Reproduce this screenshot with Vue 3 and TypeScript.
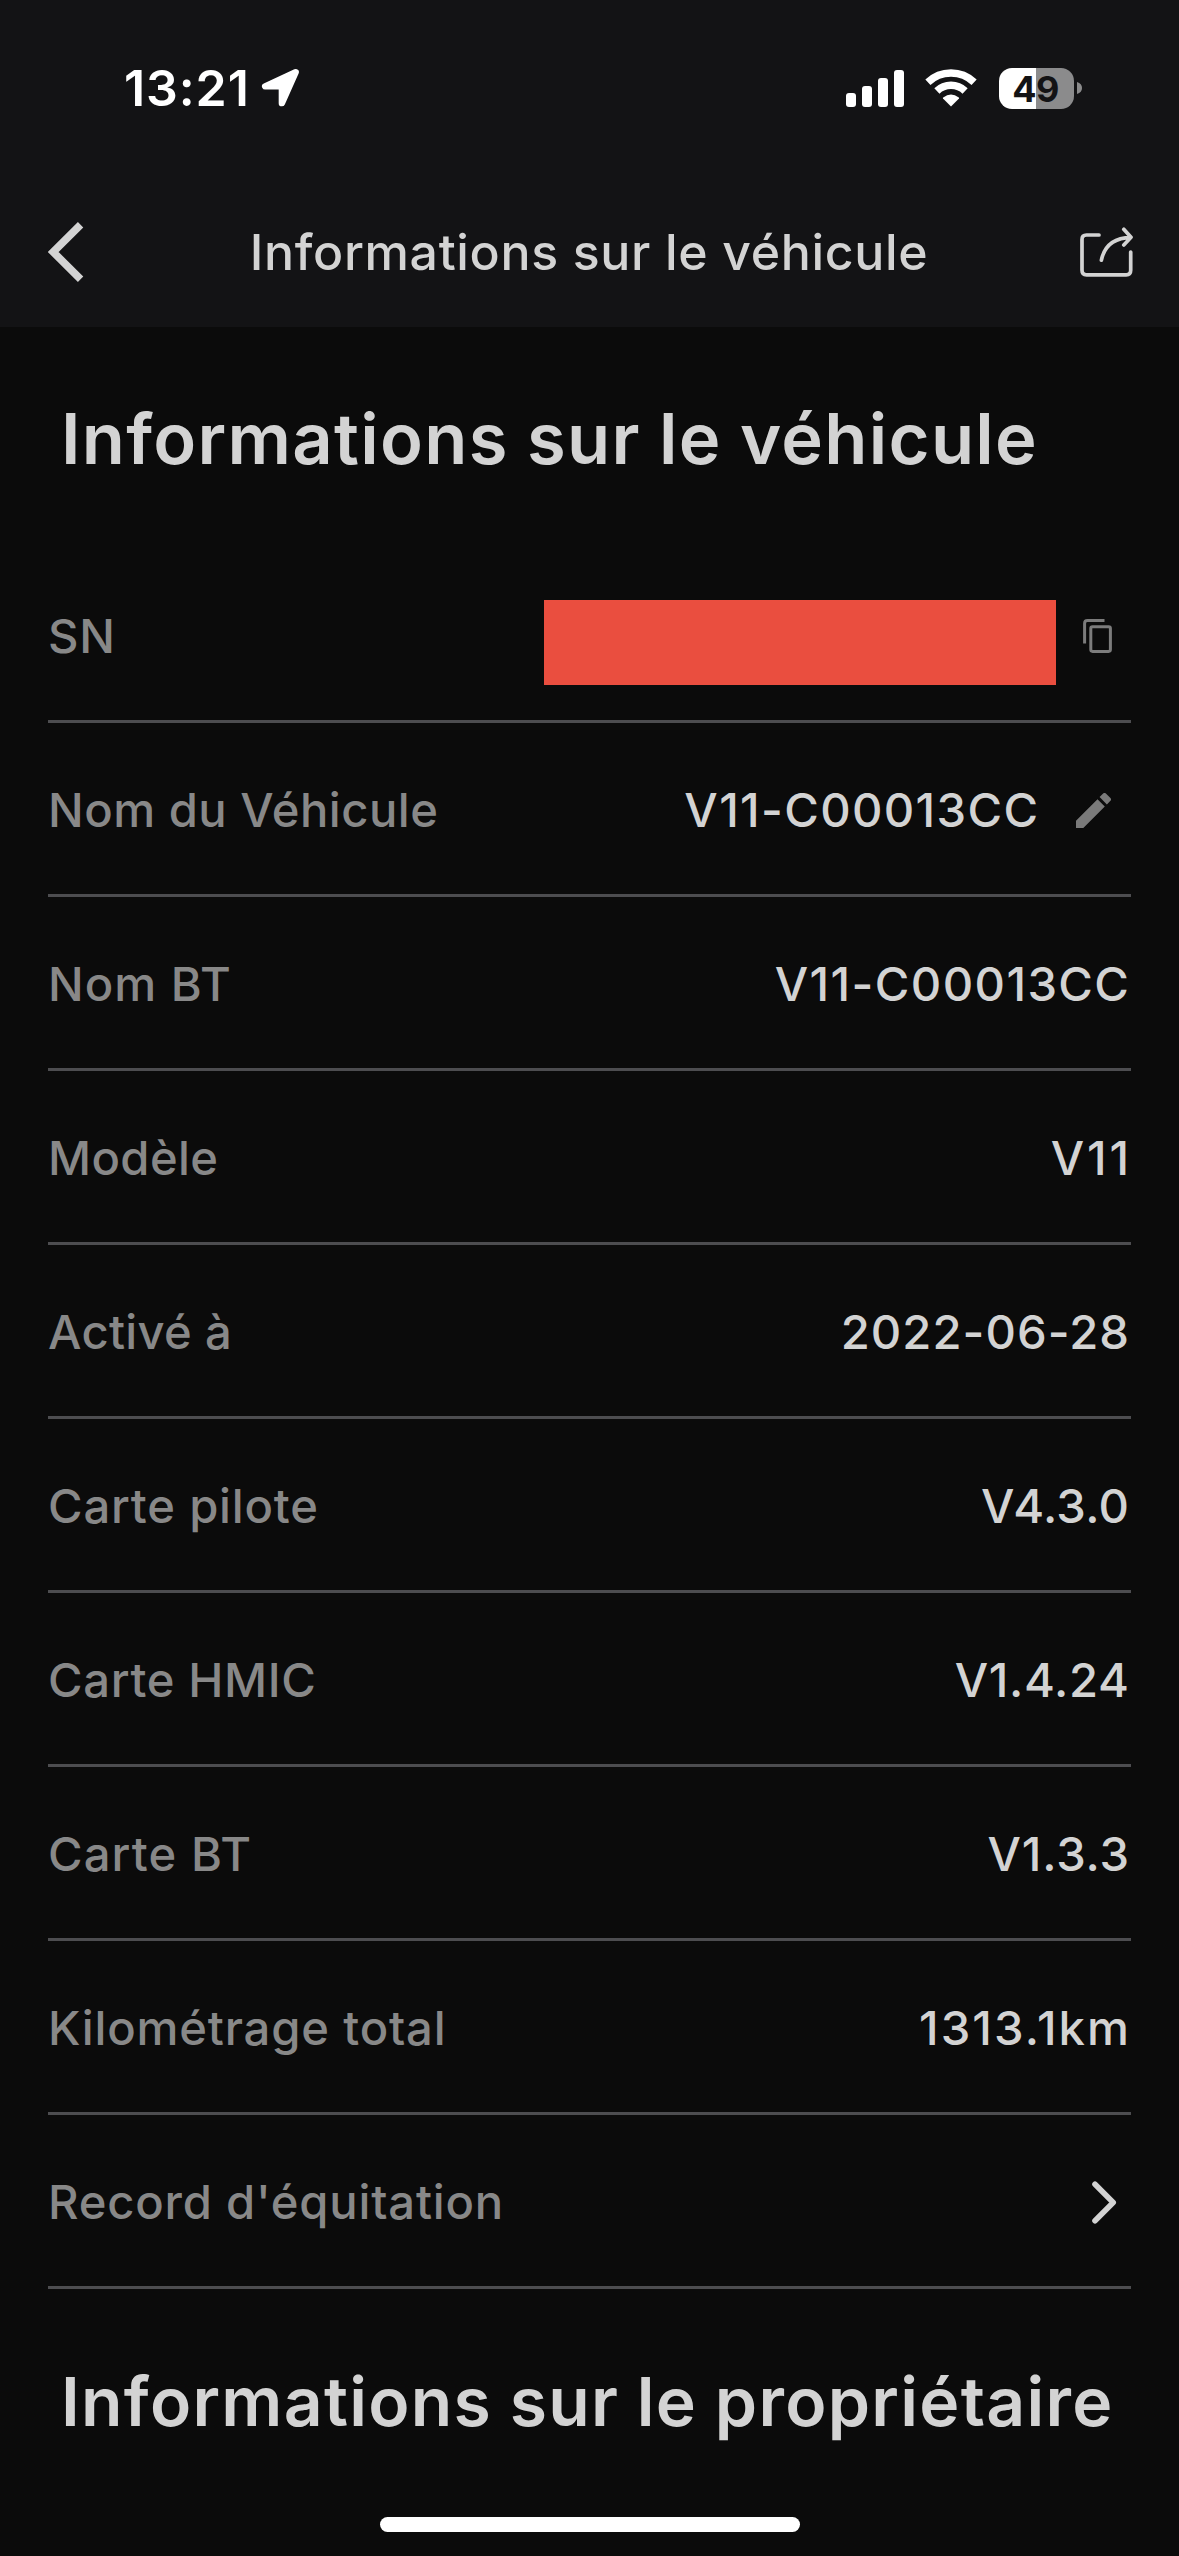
<script setup lang="ts">
interface InfoRow {
  id: string
  label: string
  value?: string
  kind?: 'serial' | 'edit' | 'link'
  /** Letter spacing in px for the label and for the value. */
  labelTrack: number
  valueTrack?: number
}

const rows: InfoRow[] = [
  { id: 'sn', label: 'SN', kind: 'serial', labelTrack: 0.8 },
  { id: 'name', label: 'Nom du Véhicule', value: 'V11-C00013CC', kind: 'edit', labelTrack: 0.5, valueTrack: 1.35 },
  { id: 'bt-name', label: 'Nom BT', value: 'V11-C00013CC', labelTrack: 1, valueTrack: 1.4 },
  { id: 'model', label: 'Modèle', value: 'V11', labelTrack: 0.4, valueTrack: 2.8 },
  { id: 'activated', label: 'Activé à', value: '2022-06-28', labelTrack: 0.3, valueTrack: 1.05 },
  { id: 'driver', label: 'Carte pilote', value: 'V4.3.0', labelTrack: 0.8, valueTrack: 0.3 },
  { id: 'hmic', label: 'Carte HMIC', value: 'V1.4.24', labelTrack: 0.65, valueTrack: 0.65 },
  { id: 'bt-board', label: 'Carte BT', value: 'V1.3.3', labelTrack: 1.1, valueTrack: 0.8 },
  { id: 'mileage', label: 'Kilométrage total', value: '1313.1km', labelTrack: 0.82, valueTrack: 2.1 },
  { id: 'rides', label: "Record d'équitation", kind: 'link', labelTrack: 0.8 },
]

const tracking = (px = 0) => ({ letterSpacing: `${px}px`, marginRight: `${-px}px` })
</script>

<template>
  <div class="screen">
    <header class="top">
      <div class="status">
        <div class="status-left">
          <span class="time">13:21</span>
          <svg class="location" width="40" height="40" viewBox="0 0 40 40">
            <path d="M35 4 L4 18.5 H21 V35.5 Z" fill="#fff" stroke="#fff" stroke-width="6.5" stroke-linejoin="round" transform="translate(.2 .2) scale(.985)" />
          </svg>
        </div>
        <div class="status-right">
          <svg class="signal" width="58" height="37" viewBox="0 0 58 37" fill="#fff">
            <rect x="0" y="23" width="10" height="14" rx="3" />
            <rect x="16" y="16" width="10" height="21" rx="3" />
            <rect x="32" y="8" width="10" height="29" rx="3" />
            <rect x="48" y="0" width="10" height="37" rx="3" />
          </svg>
          <svg class="wifi" width="52" height="38" viewBox="0 0 52 38">
            <g fill="none" stroke="#fff" stroke-width="7.4">
              <path d="M2.9 13.2 A33.5 33.5 0 0 1 49.1 13.2" />
              <path d="M11.9 22 A20.3 20.3 0 0 1 40.1 22" />
            </g>
            <path d="M26 37.6 L18 29.6 Q17.6 28.9 18.2 28.4 Q26 22.6 33.8 28.4 Q34.4 28.9 34 29.6 Z" fill="#fff" />
          </svg>
          <div class="battery">
            <div class="battery-body"><span>49</span></div>
            <svg width="5" height="12" viewBox="0 0 5 12"><path d="M0 0 Q5 1.6 5 6 Q5 10.4 0 12 Z" fill="#8b8b8c" /></svg>
          </div>
        </div>
      </div>
      <nav class="nav">
        <svg width="36" height="60" viewBox="0 0 36 60">
          <path d="M32.6 2.8 L5.2 30 L32.6 57.2" fill="none" stroke="#d3d3d3" stroke-width="7.6" />
        </svg>
        <h1>Informations sur le véhicule</h1>
        <svg width="54" height="52" viewBox="0 0 54 52" fill="none" stroke="#d3d3d3" stroke-width="3.7" stroke-linecap="round" stroke-linejoin="round">
          <path d="M19 9 H6.5 Q2 9 2 13.5 V44.3 Q2 48.8 6.5 48.8 H46.2 Q50.7 48.8 50.7 44.3 V26" />
          <path d="M21.4 34.2 C24 21 33 11.8 51 11.3 M43.8 3.3 L51 11.3 L43.8 19" />
        </svg>
      </nav>
    </header>

    <h2 class="heading">Informations sur le véhicule</h2>

    <ul class="rows">
      <li v-for="row in rows" :key="row.id" class="row" :class="row.kind">
        <span class="label" :style="tracking(row.labelTrack)">{{ row.label }}</span>
        <span class="side">
          <span v-if="row.value" class="value" :style="tracking(row.valueTrack)">{{ row.value }}</span>
          <template v-if="row.kind === 'serial'">
            <span class="mask"></span>
            <svg width="29" height="34" viewBox="0 0 29 34" fill="none" stroke="#7c7c7c" stroke-width="3">
              <path d="M1.6 24.5 V4.5 Q1.6 1.6 4.5 1.6 H21.5" />
              <rect x="7.8" y="7.8" width="19.6" height="24.6" rx="1.8" />
            </svg>
          </template>
          <svg v-else-if="row.kind === 'edit'" class="pencil" width="35" height="35" viewBox="3 3 18 18" fill="#7a7a7a">
            <path d="M3 17.25V21h3.75L17.81 9.94l-3.75-3.75L3 17.25zM20.71 7.04a.996.996 0 0 0 0-1.41l-2.34-2.34a.996.996 0 0 0-1.41 0l-1.83 1.83 3.75 3.75 1.83-1.83z" />
          </svg>
          <svg v-else-if="row.kind === 'link'" width="25" height="43" viewBox="0 0 25 43">
            <path d="M3 3.2 L21.2 21.5 L3 39.8" fill="none" stroke="#d3d3d3" stroke-width="5.6" stroke-linecap="round" stroke-linejoin="round" />
          </svg>
        </span>
      </li>
    </ul>

    <h2 class="heading owner">Informations sur le propriétaire</h2>

    <div class="home"></div>
  </div>
</template>

<style>
body {
  margin: 0;
  background: #0b0b0b;
}
</style>

<style scoped>
.screen {
  box-sizing: border-box;
  width: 1179px;
  height: 2556px;
  display: flex;
  flex-direction: column;
  overflow: hidden;
  background: #0b0b0b;
  color: #d3d3d3;
  font-family: Inter, "Liberation Sans", sans-serif;
}
svg {
  display: block;
  flex: none;
}
.top {
  height: 327px;
  background: #131315;
}
.status {
  box-sizing: border-box;
  height: 176px;
  padding: 0 97px 0 123px;
  display: flex;
  align-items: center;
  justify-content: space-between;
}
.status-left,
.status-right,
.battery {
  display: flex;
  align-items: center;
}
.time {
  width: 137px;
  margin-left: 1px;
  color: #fff;
  font-size: 50px;
  line-height: 60px;
  font-weight: 600;
  letter-spacing: 0.9px;
  white-space: nowrap;
}
.signal {
  margin-right: 21px;
}
.wifi {
  margin-right: 22px;
}
.battery {
  gap: 3px;
}
.battery-body {
  width: 75px;
  height: 41px;
  border-radius: 13px;
  background: linear-gradient(90deg, #fff 0 37px, #8b8b8c 37px);
  color: #131315;
  font-size: 36px;
  line-height: 42px;
  font-weight: 700;
  letter-spacing: -0.6px;
  text-indent: -2px;
  text-align: center;
}
.nav {
  box-sizing: border-box;
  height: 151px;
  padding: 1px 45px 0 48px;
  display: flex;
  align-items: center;
  justify-content: space-between;
}
h1,
h2 {
  margin: 0;
  white-space: nowrap;
}
h1 {
  margin-left: 14px;
  font-size: 50px;
  line-height: 60px;
  font-weight: 500;
  letter-spacing: 0.65px;
}
.heading {
  box-sizing: border-box;
  height: 222px;
  padding: 1px 0 0 61px;
  font-size: 70.5px;
  line-height: 221px;
  font-weight: 600;
  letter-spacing: 1.3px;
  word-spacing: -0.8px;
}
.owner {
  height: 225px;
  padding-top: 0;
  font-size: 67.8px;
  line-height: 225px;
  letter-spacing: 1.3px;
}
.rows {
  list-style: none;
  margin: 0 48px;
  padding: 0;
}
.row {
  box-sizing: border-box;
  height: 174px;
  padding-top: 3px;
  border-bottom: 3px solid #4d4d50;
  display: flex;
  align-items: center;
  justify-content: space-between;
  font-size: 47.2px;
  line-height: 60px;
  white-space: nowrap;
  font-weight: 500;
}
.label {
  color: #888;
}
.side {
  display: flex;
  align-items: center;
  padding-right: 2px;
}
.serial .side {
  padding-right: 19px;
}
.mask {
  width: 512px;
  height: 85px;
  margin: 13px 27px 0 0;
  background: #ea4e3f;
}
.edit .side {
  padding-right: 20px;
}
.pencil {
  margin-left: 38px;
}
.link .side {
  padding-right: 14px;
}
.home {
  width: 420px;
  height: 15px;
  margin: auto auto 24px;
  border-radius: 8px;
  background: #fff;
}
</style>
